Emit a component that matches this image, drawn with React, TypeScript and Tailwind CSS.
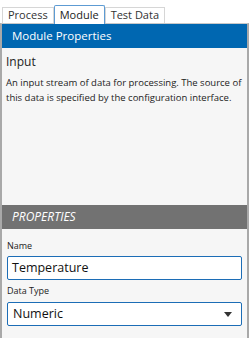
const font = { fontFamily: '"Open Sans", "Noto Sans", sans-serif' };

function Tab({ label, active }: { label: string; active?: boolean }) {
  if (active) {
    return (
      <div className="relative z-10 -mb-px flex h-[19px] items-center rounded-t-[2px] border border-b-0 border-[#5d9bd3] bg-white px-[5px] text-[11px] text-[#222]">
        {label}
      </div>
    );
  }
  return (
    <div className="flex h-[16px] items-center border border-b-0 border-[#d6d6d6] bg-white px-[5px] text-[11px] text-[#333]">
      {label}
    </div>
  );
}

export default function App() {
  return (
    <div className="flex h-[338px] w-[249px] flex-col bg-white" style={font}>
      <div className="flex items-end pl-[2px] pt-[5px]">
        <Tab label="Process" />
        <Tab label="Module" active />
        <Tab label="Test Data" />
      </div>
      <div className="flex flex-1 flex-col border-l-2 border-r-2 border-t border-l-[#a9a9a9] border-r-[#a9a9a9] border-t-[#c8c8c8] bg-[#f6f6f6]">
        <div className="flex h-[24px] items-center bg-[#0067b1] pl-[10px] text-[11.5px] text-white">
          Module Properties
        </div>
        <div className="flex h-[157px] flex-col px-[4px] pt-[6px]">
          <div className="text-[12px] leading-[16px] text-[#222]">Input</div>
          <p className="mt-[5px] text-[9.5px] leading-[15px] text-[#222]">
            An input stream of data for processing. The source of this data is specified by the configuration interface.
          </p>
        </div>
        <div className="flex h-[24px] items-center bg-[#727272] pl-[10px] text-[12px] italic text-white">
          PROPERTIES
        </div>
        <div className="flex flex-col px-[5px] pt-[10px]">
          <label className="text-[9px] leading-[14px] text-[#222]">Name</label>
          <div className="mt-[3px] flex h-[24px] items-center rounded-[2px] border border-[#1c6db6] bg-white px-[4px] text-[12.5px] text-[#111]">
            Temperature
          </div>
          <label className="mt-[4px] text-[9px] leading-[14px] text-[#222]">Data Type</label>
          <div className="mt-[4px] flex h-[24px] items-center justify-between rounded-[2px] border border-[#1c6db6] bg-white pl-[5px] pr-[9px] text-[12.5px] text-[#111]">
            <span>Numeric</span>
            <svg width="8" height="5" viewBox="0 0 8 5">
              <path d="M0 0H8L4 5Z" fill="#333" />
            </svg>
          </div>
        </div>
      </div>
    </div>
  );
}
